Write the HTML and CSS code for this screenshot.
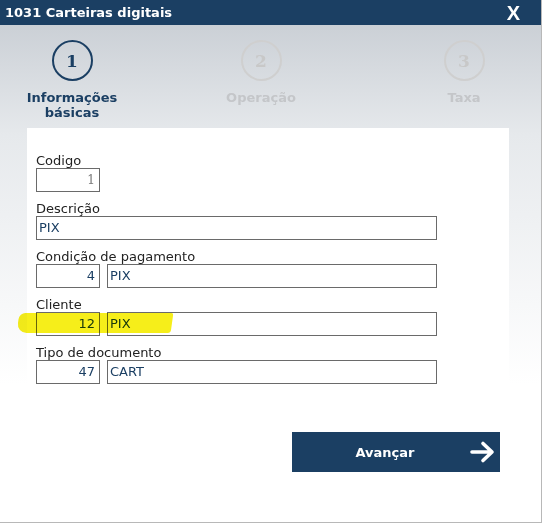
FILE: index.html
```html
<!DOCTYPE html>
<html lang="pt">
<head>
<meta charset="utf-8">
<title>1031 Carteiras digitais</title>
<link rel="stylesheet" href="styles.css">
</head>
<body>
<div class="dialog">
  <header class="titlebar">
    <span class="title">1031 Carteiras digitais</span>
    <span class="close">X</span>
  </header>
  <div class="content">
    <ol class="steps">
      <li class="step step-1 active"><span class="circle">1</span><span class="step-label">Informações<br>básicas</span></li>
      <li class="step step-2"><span class="circle">2</span><span class="step-label">Operação</span></li>
      <li class="step step-3"><span class="circle">3</span><span class="step-label">Taxa</span></li>
    </ol>
    <div class="panel">
      <div class="field">
        <label class="label">Codigo</label>
        <div class="row"><div class="input small disabled">1</div></div>
      </div>
      <div class="field">
        <label class="label">Descrição</label>
        <div class="row"><div class="input full">PIX</div></div>
      </div>
      <div class="field">
        <label class="label">Condição de pagamento</label>
        <div class="row"><div class="input small">4</div><div class="input wide">PIX</div></div>
      </div>
      <div class="field marked">
        <label class="label">Cliente</label>
        <div class="row"><div class="input small">12</div><div class="input wide">PIX</div></div>
        <span class="marker"></span>
      </div>
      <div class="field">
        <label class="label">Tipo de documento</label>
        <div class="row"><div class="input small">47</div><div class="input wide">CART</div></div>
      </div>
      <div class="actions">
        <button class="next" type="button">
          <span class="next-text">Avançar</span>
          <svg class="arrow" width="26" height="24" viewBox="0 0 26 24"><path d="M2 12H21M13 3.5L22 12L13 20.5" fill="none" stroke="#fff" stroke-width="3.6" stroke-linecap="round" stroke-linejoin="round"/></svg>
        </button>
      </div>
    </div>
  </div>
</div>
</body>
</html>
```
FILE: styles.css
```css
html, body {
  margin: 0;
  padding: 0;
  background: #ffffff;
}
body {
  font-family: "DejaVu Sans", Verdana, sans-serif;
  font-size: 13px;
  color: #222;
  width: 545px;
  height: 529px;
  overflow: hidden;
}
.dialog {
  width: 541px;
  height: 522px;
  border-right: 1px solid #b8b8b8;
  border-bottom: 1px solid #b8b8b8;
  display: flex;
  flex-direction: column;
}
.titlebar {
  height: 25px;
  background: #1b3f63;
  color: #fff;
  display: flex;
  align-items: center;
  justify-content: space-between;
  padding: 0 21px 0 5px;
}
.title {
  font-weight: bold;
  font-size: 13px;
}
.close {
  font-weight: bold;
  font-size: 20px;
  font-family: "Liberation Sans", Arial, sans-serif;
  line-height: 1;
}
.content {
  flex: 1;
  background: linear-gradient(to bottom, #cbd0d6 0px, #e6e9ec 110px, #ffffff 360px);
  display: flex;
  flex-direction: column;
}
.steps {
  list-style: none;
  margin: 0;
  padding: 15px 0 0 22px;
  height: 88px;
  display: flex;
}
.step {
  width: 100px;
  display: flex;
  flex-direction: column;
  align-items: center;
  color: #c4c6c9;
}
.step-2 { margin-left: 89px; }
.step-3 { margin-left: 103px; }
.circle {
  width: 37px;
  height: 37px;
  border: 2px solid #cfcfcf;
  border-radius: 50%;
  display: flex;
  align-items: center;
  justify-content: center;
  font-family: "DejaVu Serif", "Liberation Serif", serif;
  font-weight: bold;
  font-size: 17px;
  color: #c8c8c8;
}
.active .circle {
  border-color: #1b3f63;
  color: #1b3f63;
}
.step-label {
  margin-top: 9px;
  font-weight: bold;
  font-size: 13px;
  line-height: 15px;
  text-align: center;
}
.active .step-label { color: #1b3f63; }
.panel {
  flex: 1;
  margin: 0 32px 0 27px;
  background: #fff;
  padding: 24px 0 0 9px;
}
.field {
  position: relative;
  margin-bottom: 8px;
}
.label {
  display: block;
  line-height: 16px;
  padding-top: 1px;
  margin-bottom: -1px;
  color: #222;
}
.row {
  display: flex;
  gap: 7px;
}
.input {
  box-sizing: border-box;
  height: 24px;
  border: 1px solid #6a6a6a;
  line-height: 22px;
  color: #1b3f63;
  padding: 0 2px;
  white-space: nowrap;
}
.small {
  width: 64px;
  text-align: right;
  padding-right: 4px;
}
.wide { width: 330px; }
.full { width: 401px; }
.disabled {
  font-family: "DejaVu Serif", "Liberation Serif", serif;
  font-size: 12px;
  color: #7a7a7a;
}
.marker {
  position: absolute;
  left: -18px;
  top: 17px;
  width: 154px;
  height: 20px;
  background: #f6ee1a;
  mix-blend-mode: multiply;
  border-radius: 6px 2px 3px 10px;
  transform: skewX(-8deg);
}
.actions {
  display: flex;
  justify-content: flex-end;
  padding: 40px 9px 0 0;
}
.next {
  width: 208px;
  height: 40px;
  background: #1b3f63;
  border: none;
  color: #fff;
  display: flex;
  align-items: center;
  padding: 0 4px 0 0;
  font-family: "DejaVu Sans", Verdana, sans-serif;
  font-weight: bold;
  font-size: 13px;
}
.next-text {
  flex: 1;
  text-align: center;
  padding-left: 8px;
}
.arrow { display: block; }
```
